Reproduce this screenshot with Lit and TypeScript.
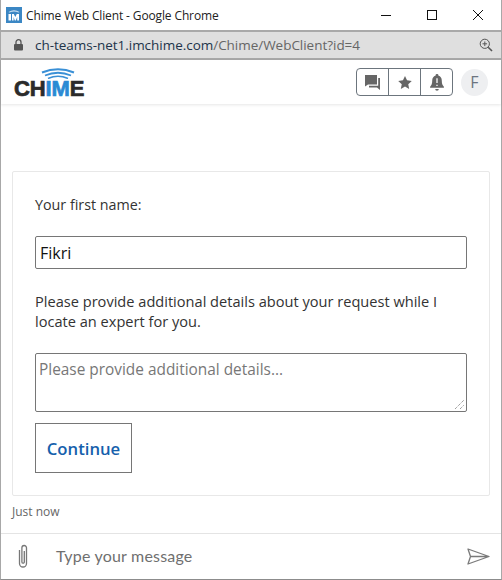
import { LitElement, html, css } from "lit";
import { customElement } from "lit/decorators.js";

@customElement("app-root")
export class AppRoot extends LitElement {
  static styles = css`
    :host { display: block; width: 502px; height: 580px; overflow: hidden; background: #fff; font-family: "Open Sans", "Noto Sans", sans-serif; color: #333; }
    * { box-sizing: border-box; }
    .win { width: 502px; height: 580px; display: flex; flex-direction: column; border: 1px solid #a8a8a8; border-top: 0; border-bottom: 1px solid #8c8c8c; }
    .title { height: 30px; flex: none; display: flex; align-items: center; padding-left: 5px; background: #fff; color: #222; }
    .fav { width: 16px; height: 16px; flex: none; display: block; }
    .title-text { margin-left: 4px; font-size: 12px; letter-spacing: -0.13px; white-space: nowrap; flex: 1; }
    .ctrls { display: flex; align-items: center; height: 30px; }
    .ctrl { width: 46px; height: 30px; display: flex; align-items: center; justify-content: center; }
    .addr { height: 30px; flex: none; background: #dfdfdf; border-top: 2px solid #a9a9a9; border-bottom: 2px solid #a9a9a9; display: flex; align-items: center; padding: 0 8px 0 13px; font-size: 13.5px; color: #22344a; white-space: nowrap; }
    .lock { margin-right: 12px; flex: none; }
    .url { flex: 1; letter-spacing: -0.03px; }
    .url span { color: #666; }
    .appbar { height: 44px; flex: none; display: flex; align-items: center; padding: 0 13px; justify-content: space-between; box-shadow: 0 1px 3px rgba(0,0,0,.1); background: #fff; position: relative; }
    .logo { display: flex; flex-direction: column; width: 72px; margin-top: 0; }
    .arcs { display: block; margin-left: 27px; }
    .wordmark { font-family: "Liberation Sans", Arial, sans-serif; font-weight: 700; font-size: 22px; line-height: 17px; height: 17px; letter-spacing: -0.15px; color: #2b2b2b; -webkit-text-stroke: 0.7px currentColor; white-space: nowrap; margin-top: 1px; }
    .wordmark span { color: #2a8ad4; }
    .tools { display: flex; align-items: center; gap: 8px; }
    .group { display: flex; width: 97px; height: 28px; border: 1px solid #6c757d; border-radius: 4px; }
    .tbtn { flex: 1; display: flex; align-items: center; justify-content: center; border-left: 1px solid #6c757d; }
    .tbtn:first-child { border-left: 0; }
    .avatar { width: 27px; height: 27px; border-radius: 50%; background: #eeeff1; color: #6c7480; font-size: 16px; display: flex; align-items: center; justify-content: center; }
    .main { flex: 1; min-height: 0; display: flex; flex-direction: column; padding: 67px 11px 0; background: #fff; }
    .card { height: 325px; flex: none; border: 1px solid #e8e8e8; border-radius: 2px; padding: 23px 22px 0; display: flex; flex-direction: column; align-items: flex-start; }
    .label { font-size: 14.3px; line-height: 20px; color: #333; }
    .inp { margin-top: 21px; width: 432px; height: 33px; border: 1px solid #767676; border-radius: 2px; padding: 0 4px; display: flex; align-items: center; font-size: 16px; font-weight: 500; color: #111; }
    .para { margin-top: 22px; font-size: 14.6px; line-height: 20px; color: #333; width: 432px; }
    .ta { margin-top: 22px; width: 432px; height: 59px; border: 1px solid #767676; border-radius: 2px; padding: 5px 3px; font-size: 15.4px; line-height: 22px; color: #777; position: relative; }
    .grip { position: absolute; right: 1px; bottom: 1px; display: block; }
    .btn { margin-top: 11px; width: 97px; height: 50px; border: 1px solid #767676; display: flex; align-items: center; justify-content: center; color: #1560ac; font-size: 16.7px; font-weight: 600; }
    .time { font-size: 12px; line-height: 16px; color: #666; margin-top: 8px; }
    .composer { height: 46px; flex: none; border-top: 1px solid #e4e4e4; display: flex; align-items: center; padding: 0 11px 0 16px; }
    .placeholder { flex: 1; margin-left: 27px; padding-bottom: 2px; font-size: 16px; color: #6f6f6f; font-family: "Lato", "Open Sans", sans-serif; letter-spacing: .2px; }
  `;

  render() {
    return html`<div class="win">
      <div class="title">
        <svg class="fav" viewBox="0 0 16 16">
          <rect width="16" height="16" fill="#3b87c4"/>
          <path d="M2.5 5 Q8 1.5 13.5 5 L12.5 5.6 Q8 3.2 3.5 5.6Z" fill="#cfe3f3"/>
          <rect x="2.5" y="7" width="2.5" height="6.5" fill="#fff"/>
          <path d="M6 13.5V7h1.8L9.3 10l1.5-3H13v6.5h-1.8V10l-1.4 3.5H8.8L7.6 10v3.500Z" fill="#fff"/>
        </svg>
        <div class="title-text">Chime Web Client - Google Chrome</div>
        <div class="ctrls">
          <div class="ctrl"><svg width="12" height="12" viewBox="0 0 12 12"><path d="M1 6.5h10" stroke="#111" fill="none"/></svg></div>
          <div class="ctrl"><svg width="12" height="12" viewBox="0 0 12 12"><rect x="1.5" y="1.5" width="9" height="9" stroke="#111" fill="none"/></svg></div>
          <div class="ctrl"><svg width="12" height="12" viewBox="0 0 12 12"><path d="M1 1l10 10M11 1L1 11" stroke="#111" fill="none"/></svg></div>
        </div>
      </div>
      <div class="addr">
        <svg class="lock" width="9" height="12" viewBox="0 0 9 12"><path d="M2 5V3.2a2.500 2.500 0 0 1 5 0V5" stroke="#555" stroke-width="1.300" fill="none"/><rect y="5" width="9" height="6.500" rx="1" fill="#555"/></svg>
        <div class="url">ch-teams-net1.imchime.com<span>/Chime/WebClient?id=4</span></div>
        <svg width="14" height="14" viewBox="0 0 14 14"><circle cx="5.800" cy="5.800" r="4.600" stroke="#555" fill="none"/><path d="M9.200 9.200L13 13" stroke="#555" stroke-width="1.600"/><path d="M3.500 5.800h4.600M5.800 3.500v4.600" stroke="#555"/></svg>
      </div>
      <div class="appbar">
        <div class="logo">
          <svg class="arcs" width="34" height="11" viewBox="0 0 34 11">
            <path d="M1 4.500 Q17 -2 33 4.500" stroke="#3a90d6" stroke-width="2" fill="none"/>
            <path d="M4 7.500 Q17 2 30 7.500" stroke="#3a90d6" stroke-width="1.800" fill="none"/>
            <path d="M7 10.500 Q17 6 27 10.500" stroke="#3a90d6" stroke-width="1.600" fill="none"/>
          </svg>
          <div class="wordmark">CH<span>IM</span>E</div>
        </div>
        <div class="tools">
          <div class="group">
            <div class="tbtn"><svg width="15" height="15" viewBox="0 0 15 15"><path d="M0 0h12v9.500H3L0 11.500Z" fill="#666"/><path d="M13.200 3H15v12l-3-2.500H4v-1.700h9.200Z" fill="#666"/></svg></div>
            <div class="tbtn"><svg width="14" height="13" viewBox="0 0 15 14"><path d="M7.500 0l2.200 4.700 5.100.6-3.800 3.500 1 5.100-4.500-2.500L3 13.900l1-5.100L.2 5.300l5.100-.6Z" fill="#666"/></svg></div>
            <div class="tbtn"><svg width="14" height="17" viewBox="0 0 13 16"><path d="M6.500 0a1.200 1.200 0 0 1 1.200 1.500C10 2.200 11 4 11 6.200c0 3 .6 4.300 2 5.800v1H0v-1c1.400-1.500 2-2.800 2-5.800C2 4 3 2.200 5.300 1.500A1.200 1.200 0 0 1 6.500 0Z" fill="#666"/><path d="M4.800 14h3.400a1.700 1.700 0 0 1-3.400 0Z" fill="#666"/><path d="M6.500 4v4.500M6.500 10v1.300" stroke="#fff" stroke-width="1.200"/></svg></div>
          </div>
          <div class="avatar">F</div>
        </div>
      </div>
      <div class="main">
        <div class="card">
          <div class="label">Your first name:</div>
          <div class="inp">Fikri</div>
          <div class="para">Please provide additional details about your request while I locate an expert for you.</div>
          <div class="ta">Please provide additional details...
            <svg class="grip" width="12" height="12" viewBox="0 0 12 12"><path d="M2 11L11 2M7 11l4-4" stroke="#777" stroke-dasharray="1 1" fill="none"/></svg>
          </div>
          <div class="btn">Continue</div>
        </div>
        <div class="time">Just now</div>
      </div>
      <div class="composer">
        <svg width="12" height="25" viewBox="0 0 12 25"><path d="M2.500 6v13.500a3.500 3.500 0 0 0 7 0V3.800a2.300 2.300 0 0 0-4.600 0V18a1 1 0 0 0 2.400 0V7" stroke="#777" stroke-width="1.300" fill="none"/></svg>
        <div class="placeholder">Type your message</div>
        <svg width="23" height="17" viewBox="0 0 23 17"><path d="M1 1l21 7.500L1 16l2.500-7.500Z M3.500 8.500H22" stroke="#7a7a7a" stroke-width="1.300" fill="none" stroke-linejoin="round"/></svg>
      </div>
    </div>`;
  }
}
